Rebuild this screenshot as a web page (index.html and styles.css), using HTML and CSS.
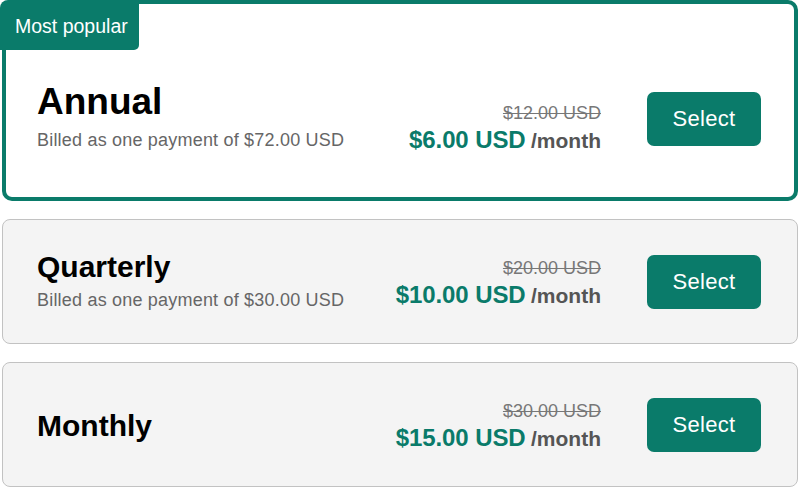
FILE: index.html
```html
<!DOCTYPE html>
<html>
<head>
<meta charset="utf-8">
<link rel="stylesheet" href="styles.css">
</head>
<body>
<div class="plans">
  <div class="card card-featured">
    <div class="badge">Most popular</div>
    <div class="info">
      <div class="title title-big">Annual</div>
      <div class="sub">Billed as one payment of $72.00 USD</div>
    </div>
    <div class="price">
      <div class="old">$12.00 USD</div>
      <div class="now"><span class="amount">$6.00 USD</span> <span class="per">/month</span></div>
    </div>
    <button class="select">Select</button>
  </div>
  <div class="card">
    <div class="info">
      <div class="title">Quarterly</div>
      <div class="sub">Billed as one payment of $30.00 USD</div>
    </div>
    <div class="price">
      <div class="old">$20.00 USD</div>
      <div class="now"><span class="amount">$10.00 USD</span> <span class="per">/month</span></div>
    </div>
    <button class="select">Select</button>
  </div>
  <div class="card">
    <div class="info">
      <div class="title">Monthly</div>
    </div>
    <div class="price">
      <div class="old">$30.00 USD</div>
      <div class="now"><span class="amount">$15.00 USD</span> <span class="per">/month</span></div>
    </div>
    <button class="select">Select</button>
  </div>
</div>
</body>
</html>
```

FILE: styles.css
```css
* { box-sizing: border-box; }
html, body { margin: 0; padding: 0; background: #ffffff; }
body {
  font-family: "Liberation Sans", Arial, sans-serif;
  color: #000;
  overflow: hidden;
}
.plans {
  display: flex;
  flex-direction: column;
  gap: 18px;
  padding: 0 2px;
}
.card {
  position: relative;
  display: flex;
  align-items: center;
  height: 125px;
  padding: 0 36px 0 34px;
  background: #f4f4f4;
  border: 1px solid #c2c2c2;
  border-radius: 8px;
}
.card-featured {
  height: 201px;
  padding: 36px 33px 0 31px;
  background: #ffffff;
  border: 4px solid #0a7b6a;
  border-radius: 10px;
}
.badge {
  position: absolute;
  left: -6px;
  top: -4px;
  width: 139px;
  height: 50px;
  padding: 15px 0 0 15px;
  background: #0a7b6a;
  color: #ffffff;
  font-size: 19.5px;
  line-height: 22px;
  border-radius: 8px 0 5px 0;
}
.info { flex: 1; }
.title {
  font-size: 30px;
  font-weight: 700;
  line-height: 34px;
  margin-top: -2px;
  margin-bottom: 4px;
}
.title:only-child {
  margin: 2px 0 0;
}
.title-big {
  font-size: 37px;
  line-height: 40px;
  margin-top: -4px;
  margin-bottom: 6px;
}
.sub {
  font-size: 18px;
  letter-spacing: 0.2px;
  color: #666666;
  line-height: 24px;
}
.price {
  text-align: right;
  margin-right: 46px;
  margin-top: 6px;
}
.card-featured .price { margin-top: 22px; }
.old {
  font-size: 18px;
  color: #777777;
  text-decoration: line-through;
  line-height: 24px;
}
.now {
  line-height: 30px;
  white-space: nowrap;
}
.amount {
  font-size: 24px;
  font-weight: 700;
  color: #0a7b6a;
  letter-spacing: -0.1px;
  margin-right: 1px;
}
.per {
  font-size: 21px;
  font-weight: 700;
  color: #555555;
}
.select {
  width: 114px;
  height: 54px;
  border: none;
  border-radius: 7px;
  background: #0a7b6a;
  color: #ffffff;
  font-family: "Liberation Sans", Arial, sans-serif;
  font-size: 22px;
  letter-spacing: 0.3px;
  padding: 0;
}
```
